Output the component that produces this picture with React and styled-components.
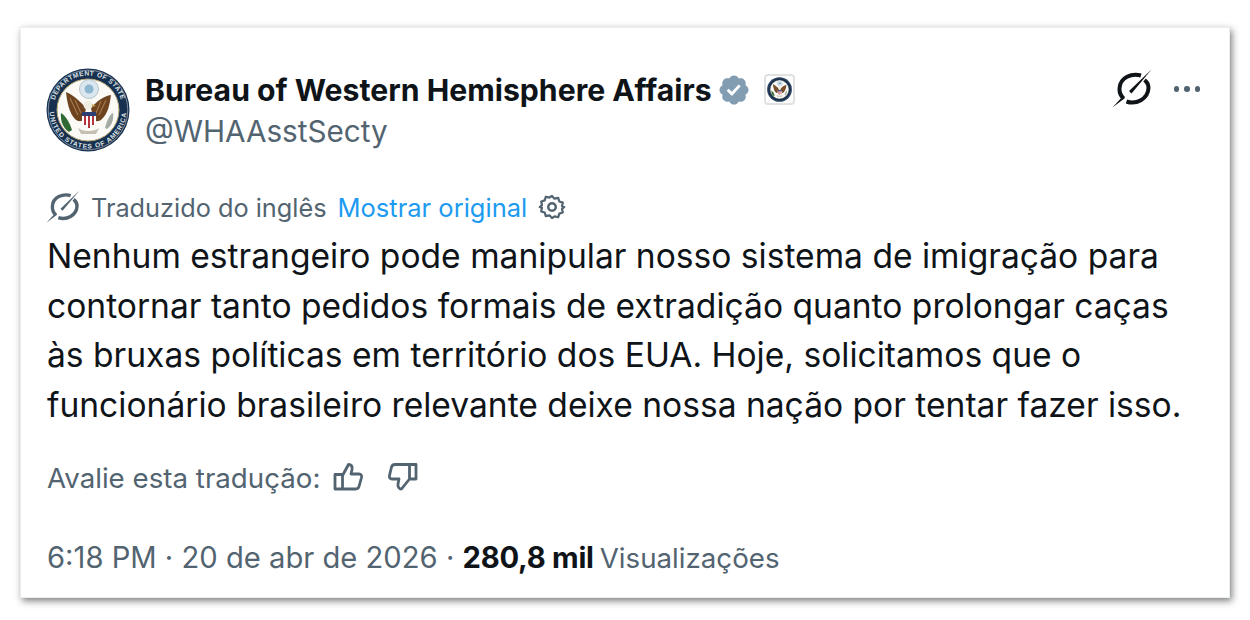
import React from 'react';
import styled, { createGlobalStyle } from 'styled-components';

const GlobalStyle = createGlobalStyle`
	html, body {
		margin: 0;
		padding: 0;
		background: #fff;
	}
	body {
		font-family: Inter, 'Liberation Sans', sans-serif;
		overflow: hidden;
	}
`;

const Page = styled.div`
	width: 1250px;
	height: 620px;
	padding: 27px 20px 22px;
	box-sizing: border-box;
`;

const Card = styled.article`
	height: 571px;
	box-sizing: border-box;
	padding: 41px 29px 0 25px;
	background: #fff;
	border: 1px solid #eceeee;
	box-shadow: 2px 3px 7px rgba(40, 44, 48, 0.6);
`;

const Header = styled.header`
	display: flex;
	align-items: center;
	height: 82px;
`;

const NameBlock = styled.div`
	display: flex;
	flex-direction: column;
	margin-left: 15px;
	margin-top: -3px;
`;

const NameRow = styled.div`
	display: flex;
	align-items: center;
	height: 42px;
`;

const Name = styled.span`
	font-size: 30.2px;
	font-weight: 700;
	color: #0f1419;
	white-space: nowrap;
`;

const Handle = styled.span`
	margin-top: 2px;
	font-size: 29.7px;
	line-height: 36px;
	color: #536471;
`;

const Affiliate = styled.span`
	display: flex;
	align-items: center;
	justify-content: center;
	width: 31px;
	height: 31px;
	margin-left: 13px;
	box-sizing: border-box;
	border: 2px solid #dfe2e3;
	border-radius: 4px;
`;

const Actions = styled.div`
	display: flex;
	align-items: center;
	align-self: flex-start;
	gap: 22px;
	margin-left: auto;
`;

const Dots = styled.span`
	display: flex;
	gap: 5px;
	> i {
		width: 5.5px;
		height: 5.5px;
		border-radius: 50%;
		background: #536471;
	}
`;

const TranslationBar = styled.div`
	display: flex;
	align-items: center;
	height: 38px;
	margin-top: 37px;
	font-size: 25.3px;
`;

const Muted = styled.span`
	color: #536471;
	margin-left: 11px;
`;

const OriginalLink = styled.a`
	color: #1d9bf0;
	font-size: 25.5px;
	margin-left: 11px;
	margin-right: 10px;
`;

const Body = styled.p`
	margin: 5px 0 0;
	padding-left: 1px;
	font-size: 33.6px;
	line-height: 49.5px;
	color: #0f1419;
	white-space: nowrap;
`;

const Rating = styled.div`
	display: flex;
	align-items: center;
	height: 40px;
	margin-top: 29px;
	margin-left: 1px;
	font-size: 27.7px;
	color: #536471;
`;

const Thumb = styled.svg`
	margin-left: ${p => p.$gap}px;
	margin-top: -3px;
`;

const Meta = styled.div`
	display: flex;
	align-items: baseline;
	margin-top: 40px;
	margin-left: 1px;
	font-size: 29.2px;
	line-height: 40px;
	color: #536471;
	white-space: pre;
`;

const Views = styled.strong`
	font-weight: 700;
	color: #0f1419;
	letter-spacing: -0.25px;
`;

const ViewsLabel = styled.span`
	font-size: 27.7px;
	margin-left: 6px;
`;

const Seal = ({ size }) => (
	<svg width={size} height={size} viewBox="0 0 84 84">
		<defs>
			<path id="seal-top" d="M7.500 42a34.500 34.500 0 0 1 69 0" />
			<path id="seal-bottom" d="M3.500 42a38.500 38.500 0 0 0 77 0" />
		</defs>
		<circle cx="42" cy="42" r="41.500" fill="#17304f" />
		<circle cx="42" cy="42" r="39.800" fill="none" stroke="#aab4bd" strokeWidth="0.700" />
		<circle cx="42" cy="42" r="31" fill="#fbfaf6" stroke="#b9a878" strokeWidth="1" />
		{size > 40 && (
			<text fontSize="6.600" fontWeight="700" fill="#dfe3e6" fontFamily="'Liberation Sans', sans-serif" letterSpacing="0.500">
				<textPath href="#seal-top" startOffset="50%" textAnchor="middle">DEPARTMENT OF STATE</textPath>
			</text>
		)}
		{size > 40 && (
			<text fontSize="6.600" fontWeight="700" fill="#dfe3e6" fontFamily="'Liberation Sans', sans-serif" letterSpacing="0.900">
				<textPath href="#seal-bottom" startOffset="50%" textAnchor="middle">UNITED STATES OF AMERICA</textPath>
			</text>
		)}
		<circle cx="43" cy="21" r="9.500" fill="#dbe7ee" stroke="#a9b9c2" strokeWidth="0.800" />
		<circle cx="43" cy="21" r="4.500" fill="#8fb6d1" />
		<path d="M40 40C34 33 27 27 20 24c1 9 3 21 9 27 3 3 7 3 9 0z" fill="#6e4320" />
		<path d="M45 40c6-7 13-12 20-13-1 8-3 19-9 24-3 3-7 3-9 0z" fill="#6e4320" />
		<path d="M24 30l8 17M29 32l6 13M60 32l-7 15M55 33l-5 12" stroke="#a67c4c" strokeWidth="1.100" />
		<circle cx="42" cy="37" r="4.500" fill="#efece2" />
		<path d="M46 36l4 2-4 1z" fill="#c9a24a" />
		<path d="M36 44h14v9c0 3-4 5-7 7-3-2-7-4-7-7z" fill="#fff" />
		<path d="M36 44h14v4H36z" fill="#2d3f70" />
		<path d="M38 48h2v9h-2zM42 48h2v12h-2zM46 48h2v9h-2z" fill="#b5333c" />
		<path d="M15 45c4 2 8 8 11 17l-3 2c-5-3-9-10-8-19z" fill="#2f6a35" />
		<path d="M67 45c-3 1-6 7-8 15l2 1c4-3 7-8 6-16z" fill="#a5aaa5" />
		<path d="M32 60c5 4 16 4 21 0l-3 6H35z" fill="#c5c0b2" />
	</svg>
);

const Verified = () => (
	<svg width="34" height="34" viewBox="0 0 22 22" style={{ marginLeft: 5 }}>
		<path
			fill="#829cb1"
			d="M20.396 11c-.018-.646-.215-1.275-.57-1.816-.354-.54-.852-.972-1.438-1.246.223-.607.27-1.264.14-1.897-.131-.634-.437-1.218-.882-1.687-.47-.445-1.053-.75-1.687-.882-.633-.13-1.29-.083-1.897.14-.273-.587-.704-1.086-1.245-1.44S11.647 1.62 11 1.604c-.646.017-1.273.213-1.813.568s-.969.854-1.24 1.44c-.608-.223-1.267-.272-1.902-.14-.635.13-1.22.436-1.69.882-.445.47-.749 1.055-.878 1.688-.13.633-.08 1.29.144 1.896-.587.274-1.087.705-1.443 1.245-.356.54-.555 1.17-.574 1.817.02.647.218 1.276.574 1.817.356.54.856.972 1.443 1.245-.224.606-.274 1.263-.144 1.896.13.634.433 1.218.877 1.688.47.443 1.054.747 1.687.878.633.132 1.29.084 1.897-.136.274.586.705 1.084 1.246 1.439.54.354 1.17.551 1.816.569.647-.016 1.276-.213 1.817-.567s.972-.854 1.245-1.44c.604.239 1.266.296 1.903.164.636-.132 1.22-.447 1.68-.907.46-.46.776-1.044.908-1.681s.075-1.299-.165-1.903c.586-.274 1.084-.705 1.439-1.246.354-.54.551-1.17.569-1.816z"
		/>
		<path fill="#fff" d="M9.662 14.85l-3.429-3.428 1.293-1.302 2.072 2.072 4.4-4.794 1.347 1.246z" />
	</svg>
);

const TranslateIcon = ({ size, color }) => (
	<svg width={size} height={size} viewBox="0 0 40 40">
		<path
			d="M29 6.500C20 4 8 8 7.500 19.500 7.300 23.500 9 27 11.500 29.500M14.500 32.500C24 36 36 30 36.500 19 36.600 16 35 13 32.500 11"
			fill="none"
			stroke={color}
			strokeWidth="4"
		/>
		<path d="M39.500.5 17 22 19.500 24.500zM.5 38.500 11 27 13 29z" fill={color} />
	</svg>
);

const Gear = () => (
	<svg width="30" height="30" viewBox="0 0 24 24" fill="none" stroke="#536471" strokeWidth="2" strokeLinejoin="round">
		<path d="M12 2.200l2.300 2.400 3.200-.7 1 3.200 3.100 1-.7 3.200 2 .7-2 1.700.7 3.200-3.100 1-1 3.200-3.200-.7L12 21.800l-2.300-2.400-3.200.7-1-3.200-3.100-1 .7-3.200L1.100 12l2-1.700-.7-3.200 3.100-1 1-3.200 3.200.7z" transform="translate(1.200 1.200) scale(.9)" />
		<circle cx="12" cy="12" r="3" />
	</svg>
);

const ThumbUp = () => (
	<Thumb $gap={12} width="32" height="32" viewBox="0 0 32 32" fill="none" stroke="#536471" strokeWidth="2.800" strokeLinejoin="round">
		<path d="M3 13.500h7.500V28H3zM10.500 14.500l6-11c3 0 4 2 3.500 5l-1 4.500h8c2 0 3 1.500 2.500 3.500L27 25.500c-.5 2-2 2.500-3.500 2.500h-13" />
	</Thumb>
);

const ThumbDown = () => (
	<Thumb $gap={23} width="32" height="32" viewBox="0 0 32 32" fill="none" stroke="#536471" strokeWidth="2.800" strokeLinejoin="round">
		<path d="M29 3.500h-6.500V18H29zM22.500 3.500H8C6 3.500 5 4.500 4.500 6L2.500 14.500C2 16.500 3 18 5 18h7l-1 5c-.5 2.500 1 5 3.500 5l8-10" />
	</Thumb>
);

export default function App() {
	return (
		<Page>
			<GlobalStyle />
			<Card>
				<Header>
					<Seal size={84} />
					<NameBlock>
						<NameRow>
							<Name>Bureau of Western Hemisphere Affairs</Name>
							<Verified />
							<Affiliate><Seal size={25} /></Affiliate>
						</NameRow>
						<Handle>@WHAAsstSecty</Handle>
					</NameBlock>
					<Actions>
						<TranslateIcon size={40} color="#0f1419" />
						<Dots><i /><i /><i /></Dots>
					</Actions>
				</Header>
				<TranslationBar>
					<TranslateIcon size={34} color="#536471" />
					<Muted>Traduzido do inglês</Muted>
					<OriginalLink>Mostrar original</OriginalLink>
					<Gear />
				</TranslationBar>
				<Body>
					Nenhum estrangeiro pode manipular nosso sistema de imigração para<br />
					contornar tanto pedidos formais de extradição quanto prolongar caças<br />
					às bruxas políticas em território dos EUA. Hoje, solicitamos que o<br />
					funcionário brasileiro relevante deixe nossa nação por tentar fazer isso.
				</Body>
				<Rating>
					Avalie esta tradução:
					<ThumbUp />
					<ThumbDown />
				</Rating>
				<Meta>
					6:18 PM · 20 de abr de 2026 · <Views>280,8 mil</Views>
					<ViewsLabel>Visualizações</ViewsLabel>
				</Meta>
			</Card>
		</Page>
	);
}
